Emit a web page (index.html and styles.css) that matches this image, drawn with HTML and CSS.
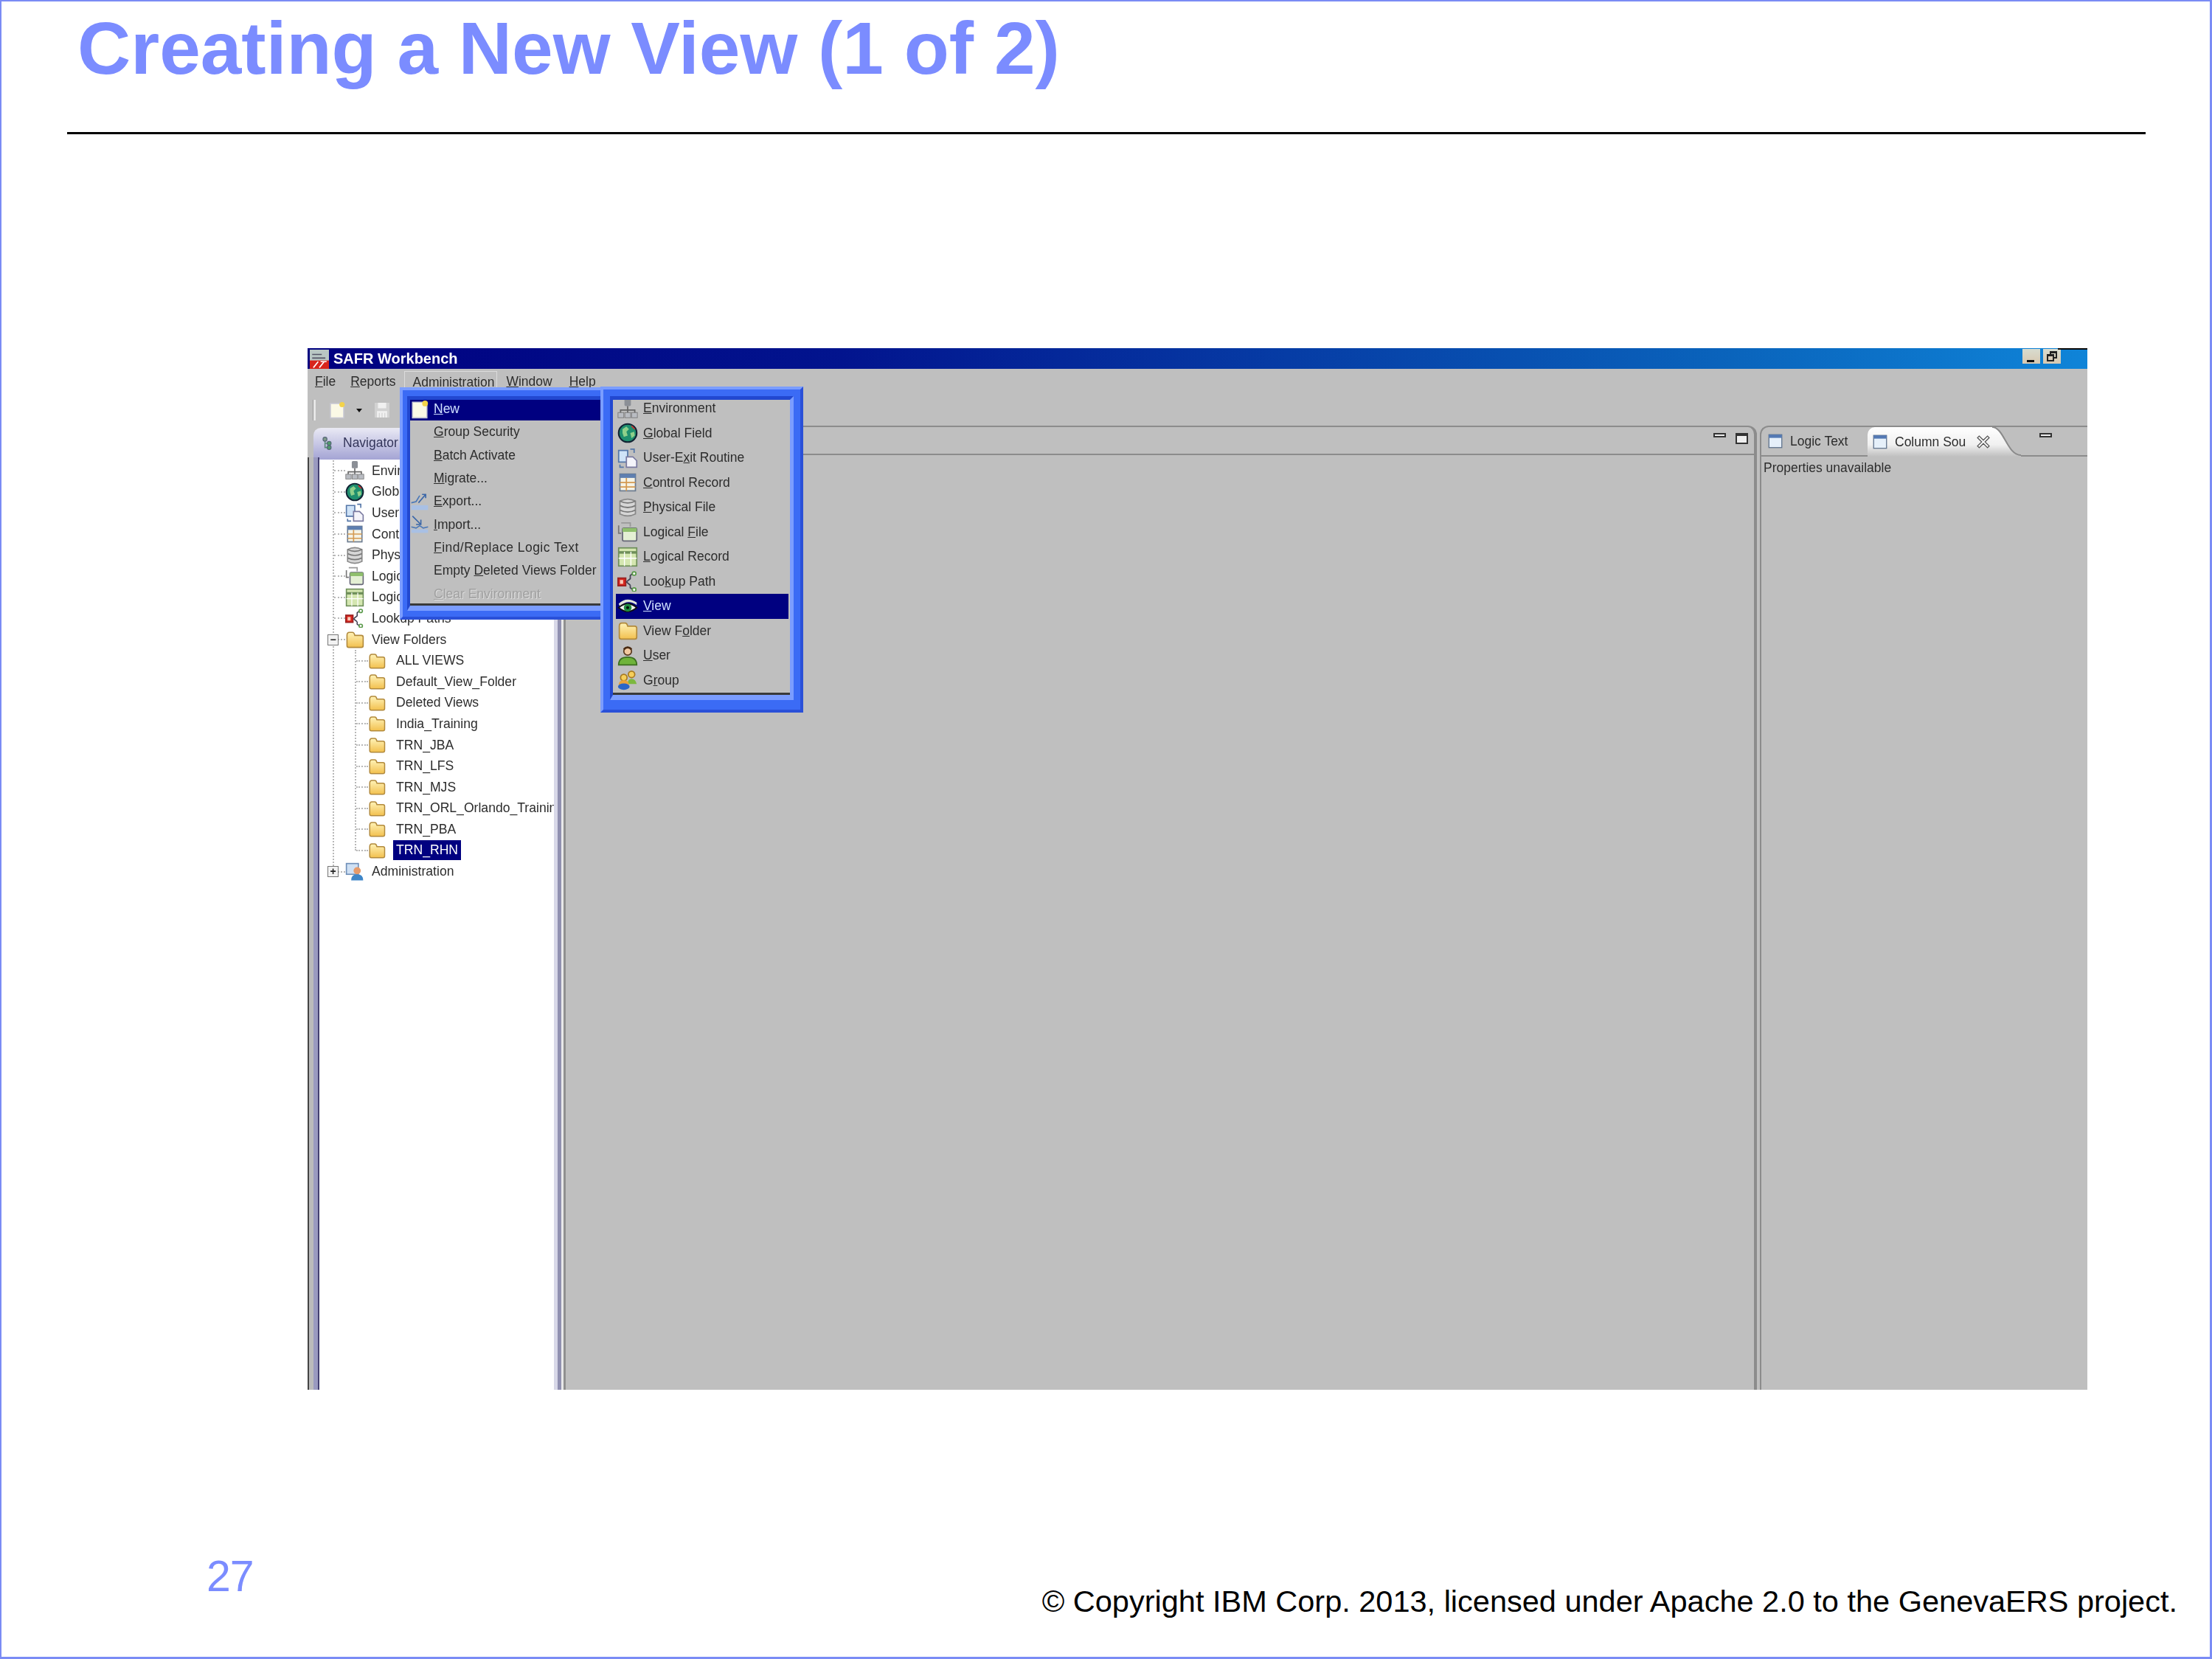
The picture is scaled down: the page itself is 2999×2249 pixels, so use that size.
FILE: index.html
```html
<!DOCTYPE html>
<html lang="en">
<head>
<meta charset="utf-8">
<title>Creating a New View (1 of 2)</title>
<link rel="stylesheet" href="styles.css">
</head>
<body>
<svg class="defs" width="0" height="0" aria-hidden="true">
  <defs>
    <linearGradient id="fold" x1="0" y1="0" x2="0" y2="1"><stop offset="0" stop-color="#fff3b8"/><stop offset="1" stop-color="#f2c04e"/></linearGradient>
    <linearGradient id="tabfill" x1="0" y1="0" x2="0" y2="1"><stop offset="0" stop-color="#fff"/><stop offset=".6" stop-color="#f0f0f0"/><stop offset="1" stop-color="#bfbfbf"/></linearGradient>
    <symbol id="i-folder" viewBox="0 0 16 16"><path d="M1.500 13V4.500Q1.500 2 3.500 2h2.500Q7.500 2 8 4.500h5.500q1.500 0 1.500 1.500v7q0 1.500-1.500 1.500H3q-1.500 0-1.500-1.500z" fill="url(#fold)" stroke="#b28a3c"/></symbol>
    <symbol id="i-env" viewBox="0 0 16 16"><rect x="5.500" y="0" width="5" height="6" rx="1" fill="#8b8f96"/><path d="M8 6v3M2.500 12V9h11v3M8 9v3" stroke="#666" fill="none"/><rect x="0.500" y="11" width="4.500" height="4" fill="#b9bcc2" stroke="#777" stroke-width=".5"/><rect x="5.800" y="11" width="4.500" height="4" fill="#b9bcc2" stroke="#777" stroke-width=".5"/><rect x="11" y="11" width="4.500" height="4" fill="#b9bcc2" stroke="#777" stroke-width=".5"/></symbol>
    <symbol id="i-globe" viewBox="0 0 16 16"><circle cx="8" cy="8" r="7" fill="#1f8f6e" stroke="#123" stroke-width="1.200"/><path d="M4 5l3-2 2 2-2 2 1 3-3 1-1-3zM10 8l3-1 .5 3-2.500 2z" fill="#8fd08a"/><path d="M11 2.500l2.500 2.500" stroke="#c33"/></symbol>
    <symbol id="i-exit" viewBox="0 0 16 16"><path d="M1 2h7v9H1z" fill="#cfe3f7" stroke="#5577a8"/><path d="M7 7h5l3 3v5H7z" fill="#f4f4fa" stroke="#7a7aa0"/><path d="M10 1l3 0 0 3M2 13l0 2 3 0" stroke="#5577a8" fill="none"/></symbol>
    <symbol id="i-table" viewBox="0 0 16 16"><rect x="2" y="1.500" width="12" height="13" fill="#f5f3e6" stroke="#6b7b90"/><rect x="2" y="1.500" width="12" height="3" fill="#5e7fb0"/><path d="M2 8h12M2 11.500h12M7 4.500v10" stroke="#d49a52"/></symbol>
    <symbol id="i-db" viewBox="0 0 16 16"><path d="M2 3q6-3 12 0v10q-6 3-12 0z" fill="#d6d6d6" stroke="#888"/><path d="M2 3q6 3 12 0M2 6.500q6 3 12 0M2 10q6 3 12 0" fill="none" stroke="#777"/></symbol>
    <symbol id="i-lfile" viewBox="0 0 16 16"><path d="M3 1h7v3" fill="none" stroke="#999"/><path d="M1 3v6h2" fill="none" stroke="#777"/><rect x="4" y="5" width="11" height="10" rx="1" fill="#e4f0d4" stroke="#667"/><rect x="4" y="5" width="11" height="3" fill="#8fbf6c"/></symbol>
    <symbol id="i-lrec" viewBox="0 0 16 16"><rect x="1" y="1" width="14" height="14" fill="#d4e6b0" stroke="#6f8f5a"/><path d="M1 4.500h14" stroke="#6f8f5a" stroke-width="2"/><path d="M1 9h14M5.500 4v11M10.500 4v11" stroke="#fff" stroke-width=".8"/></symbol>
    <symbol id="i-look" viewBox="0 0 16 16"><rect x="0.500" y="5.500" width="6" height="6" fill="#d8251c" stroke="#922"/><rect x="2" y="7" width="2.500" height="3" fill="#f9c9b8"/><path d="M7 8.500L10 6V3.500L12 2M10 11V13L12 14.500M7 8.500L10 11" fill="none" stroke="#445"/><circle cx="13" cy="2" r="1.400" fill="#fff" stroke="#5a9a4a"/><circle cx="13" cy="14.500" r="1.400" fill="#fff" stroke="#5a9a4a"/></symbol>
    <symbol id="i-eye" viewBox="0 0 16 16"><rect width="16" height="16" fill="#000080"/><path d="M1 6Q7 0 15 5l0 2Q8 2 2 8z" fill="#dfe5d8"/><path d="M1 9Q8 3 15 9 8 15 1 9z" fill="#eef3ee" stroke="#111"/><circle cx="8" cy="9" r="3" fill="#1f8a3e"/><circle cx="8" cy="9" r="1.200" fill="#02140a"/></symbol>
    <symbol id="i-user" viewBox="0 0 16 16"><circle cx="8" cy="4.500" r="3" fill="#f2c9a0" stroke="#5a3a20"/><path d="M5 3q3-3 6 0" stroke="#4a2c14" stroke-width="1.500" fill="none"/><path d="M1 15q0-6 7-6t7 6z" fill="#6fb33a" stroke="#3c6e20"/></symbol>
    <symbol id="i-group" viewBox="0 0 16 16"><circle cx="11" cy="3.500" r="2.500" fill="#f6cf5a" stroke="#a87a20"/><circle cx="5" cy="6" r="2.500" fill="#f6cf5a" stroke="#a87a20"/><path d="M8 11q0-4 3-4t4 4z" fill="#7cb83f"/><path d="M1 12q0-4 4-4t4 4z" fill="#e8a33a"/><ellipse cx="5" cy="13" rx="4.500" ry="2.500" fill="#2a66c8"/></symbol>
    <symbol id="i-new" viewBox="0 0 16 16"><path d="M2 2h9l3 3v10H2z" fill="#fbf9e6" stroke="#c8c8d4"/><circle cx="12.500" cy="3" r="2.400" fill="#f3d34a"/></symbol>
    <symbol id="i-export" viewBox="0 0 16 16"><path d="M1 9l4-1 3-5" fill="none" stroke="#4a78b8"/><path d="M7 9l6-7M10 2h3v3" fill="none" stroke="#3a66a8"/><rect x="1" y="11" width="14" height="4" fill="#a9c0e4"/></symbol>
    <symbol id="i-import" viewBox="0 0 16 16"><path d="M2 1l7 7M9 4v4H5" fill="none" stroke="#3a66a8"/><path d="M1 10l4 1 3-2 3 2 4-1" fill="none" stroke="#4a78b8"/><rect x="1" y="12" width="14" height="3" fill="#a9c0e4"/></symbol>
    <symbol id="i-nav" viewBox="0 0 16 16"><path d="M5 3v10h5M5 8h5" fill="none" stroke="#5a8a7a" stroke-width="1.400"/><circle cx="5" cy="3" r="2.400" fill="#7f9a8a" stroke="#567"/><circle cx="10" cy="8" r="2.400" fill="#4f9a6a" stroke="#567"/><circle cx="10" cy="13" r="2.400" fill="#4f9a6a" stroke="#567"/></symbol>
    <symbol id="i-admin" viewBox="0 0 16 16"><rect x="1" y="1" width="10" height="9" fill="#cfe0f4" stroke="#6f8fb8"/><circle cx="10" cy="7" r="3" fill="#e69a6a"/><path d="M5 15q0-5 5-5t5 5z" fill="#3f86c8"/></symbol>
    <symbol id="i-win" viewBox="0 0 16 16"><rect x="1" y="1" width="14" height="14" fill="#e6f0fa" stroke="#5c6f8a"/><rect x="1" y="1" width="14" height="3.500" fill="#5479b4"/></symbol>
  </defs>
</svg>

<main class="slide">
  <h1 class="title">Creating a New View (1 of 2)</h1>
  <hr class="rule">

  <section class="app">
    <header class="titlebar">
      <svg class="app-icon" viewBox="0 0 16 16"><rect width="16" height="16" fill="#b9c7c4"/><path d="M0 9h16v7H0z" fill="#d8251c"/><path d="M2 4h8M2 7h11" stroke="#556" /><path d="M3 15l4-5M8 15l4-5M9 10h5" stroke="#fff"/></svg>
      <span class="app-name">SAFR Workbench</span>
      <span class="win-btns">
        <span class="win-btn"><span class="glyph-min"></span></span>
        <span class="win-btn"><span class="glyph-back"></span><span class="glyph-front"></span></span>
      </span>
    </header>

    <nav class="menubar">
      <span class="mi mi-file"><u>F</u>ile</span>
      <span class="mi mi-rep"><u>R</u>eports</span>
      <span class="mi mi-admin"><u>A</u>dministration</span>
      <span class="mi mi-win"><u>W</u>indow</span>
      <span class="mi mi-help"><u>H</u>elp</span>
    </nav>

    <div class="toolbar">
      <span class="tb-sep"></span>
      <svg class="tb-icon"><use href="#i-new"/></svg>
      <span class="tb-arrow"></span>
      <svg class="tb-save" viewBox="0 0 16 16"><rect x="0" y="0" width="16" height="16" fill="#d2d2d2"/><rect x="3.500" y="0" width="9" height="6" fill="#f0f0f0"/><rect x="2.500" y="9" width="11" height="7" fill="#f0f0f0"/><path d="M5 11v5M8 11v5M11 11v5" stroke="#d2d2d2"/></svg>
    </div>

    <div class="workspace">
      <aside class="nav">
        <div class="nav-tab">
          <svg class="nav-icon"><use href="#i-nav"/></svg>
          <span>Navigator</span>
        </div>
        <div class="tree">
          <div class="branch">
            <div class="node"><span class="dash"></span><svg class="ticon"><use href="#i-env"/></svg><span class="lbl">Environments</span></div>
            <div class="node"><span class="dash"></span><svg class="ticon"><use href="#i-globe"/></svg><span class="lbl">Global Fields</span></div>
            <div class="node"><span class="dash"></span><svg class="ticon"><use href="#i-exit"/></svg><span class="lbl">User-Exit Routines</span></div>
            <div class="node"><span class="dash"></span><svg class="ticon"><use href="#i-table"/></svg><span class="lbl">Control Records</span></div>
            <div class="node"><span class="dash"></span><svg class="ticon"><use href="#i-db"/></svg><span class="lbl">Physical Files</span></div>
            <div class="node"><span class="dash"></span><svg class="ticon"><use href="#i-lfile"/></svg><span class="lbl">Logical Files</span></div>
            <div class="node"><span class="dash"></span><svg class="ticon"><use href="#i-lrec"/></svg><span class="lbl">Logical Records</span></div>
            <div class="node"><span class="dash"></span><svg class="ticon"><use href="#i-look"/></svg><span class="lbl">Lookup Paths</span></div>
            <div class="node"><span class="dash"></span><span class="exp">&#8722;</span><svg class="ticon"><use href="#i-folder"/></svg><span class="lbl">View Folders</span></div>
            <div class="branch sub">
              <div class="node"><span class="dash"></span><svg class="ticon"><use href="#i-folder"/></svg><span class="lbl">ALL VIEWS</span></div>
              <div class="node"><span class="dash"></span><svg class="ticon"><use href="#i-folder"/></svg><span class="lbl">Default_View_Folder</span></div>
              <div class="node"><span class="dash"></span><svg class="ticon"><use href="#i-folder"/></svg><span class="lbl">Deleted Views</span></div>
              <div class="node"><span class="dash"></span><svg class="ticon"><use href="#i-folder"/></svg><span class="lbl">India_Training</span></div>
              <div class="node"><span class="dash"></span><svg class="ticon"><use href="#i-folder"/></svg><span class="lbl">TRN_JBA</span></div>
              <div class="node"><span class="dash"></span><svg class="ticon"><use href="#i-folder"/></svg><span class="lbl">TRN_LFS</span></div>
              <div class="node"><span class="dash"></span><svg class="ticon"><use href="#i-folder"/></svg><span class="lbl">TRN_MJS</span></div>
              <div class="node"><span class="dash"></span><svg class="ticon"><use href="#i-folder"/></svg><span class="lbl">TRN_ORL_Orlando_Training</span></div>
              <div class="node"><span class="dash"></span><svg class="ticon"><use href="#i-folder"/></svg><span class="lbl">TRN_PBA</span></div>
              <div class="node"><span class="dash"></span><svg class="ticon"><use href="#i-folder"/></svg><span class="lbl sel">TRN_RHN</span></div>
            </div>
            <div class="node"><span class="dash"></span><span class="exp">+</span><svg class="ticon"><use href="#i-admin"/></svg><span class="lbl">Administration</span></div>
          </div>
        </div>
      </aside>

      <section class="editor">
        <div class="pane-head">
          <span class="btn-min"></span>
          <span class="btn-max"></span>
        </div>
      </section>

      <section class="props">
        <div class="props-head">
          <div class="tab">
            <svg class="tab-icon"><use href="#i-win"/></svg>
            <span>Logic Text</span>
          </div>
          <div class="tab tab-on">
            <svg class="tab-icon"><use href="#i-win"/></svg>
            <span>Column Sou</span>
            <svg class="tab-close" viewBox="0 0 16 16"><path d="M3 1l5 5 5-5 2 2-5 5 5 5-2 2-5-5-5 5-2-2 5-5-5-5z" fill="#fff" stroke="#555" stroke-width="1.200"/></svg>
          </div>
          <svg class="tab-curve" viewBox="0 0 39 40" preserveAspectRatio="none"><path d="M0 0C16 0 20 38 39 38V40H0z" fill="url(#tabfill)"/><path d="M0 0C16 0 20 38 39 38" fill="none" stroke="#8a8a8a" stroke-width="2"/></svg>
          <span class="btn-min props-min"></span>
        </div>
        <p class="props-msg">Properties unavailable</p>
      </section>
    </div>

    <div class="menu menu-admin">
      <div class="menu-body">
        <div class="row row-on"><svg class="micon"><use href="#i-new"/></svg><span><u>N</u>ew</span></div>
        <div class="row"><span class="micon"></span><span><u>G</u>roup Security</span></div>
        <div class="row"><span class="micon"></span><span><u>B</u>atch Activate</span></div>
        <div class="row"><span class="micon"></span><span><u>M</u>igrate...</span></div>
        <div class="row"><svg class="micon"><use href="#i-export"/></svg><span><u>E</u>xport...</span></div>
        <div class="row"><svg class="micon"><use href="#i-import"/></svg><span><u>I</u>mport...</span></div>
        <div class="row row-wide"><span class="micon"></span><span><u>F</u>ind/Replace Logic Text</span></div>
        <div class="row"><span class="micon"></span><span>Empty <u>D</u>eleted Views Folder</span></div>
        <div class="row row-off"><span class="micon"></span><span><u>C</u>lear Environment</span></div>
      </div>
    </div>

    <div class="menu menu-new">
      <div class="menu-body">
        <div class="row"><svg class="micon"><use href="#i-env"/></svg><span><u>E</u>nvironment</span></div>
        <div class="row"><svg class="micon"><use href="#i-globe"/></svg><span><u>G</u>lobal Field</span></div>
        <div class="row"><svg class="micon"><use href="#i-exit"/></svg><span>User-E<u>x</u>it Routine</span></div>
        <div class="row"><svg class="micon"><use href="#i-table"/></svg><span><u>C</u>ontrol Record</span></div>
        <div class="row"><svg class="micon"><use href="#i-db"/></svg><span><u>P</u>hysical File</span></div>
        <div class="row"><svg class="micon"><use href="#i-lfile"/></svg><span>Logical <u>F</u>ile</span></div>
        <div class="row"><svg class="micon"><use href="#i-lrec"/></svg><span><u>L</u>ogical Record</span></div>
        <div class="row"><svg class="micon"><use href="#i-look"/></svg><span>Loo<u>k</u>up Path</span></div>
        <div class="row row-on"><svg class="micon"><use href="#i-eye"/></svg><span><u>V</u>iew</span></div>
        <div class="row"><svg class="micon"><use href="#i-folder"/></svg><span>View F<u>o</u>lder</span></div>
        <div class="row"><svg class="micon"><use href="#i-user"/></svg><span><u>U</u>ser</span></div>
        <div class="row"><svg class="micon"><use href="#i-group"/></svg><span>G<u>r</u>oup</span></div>
      </div>
    </div>
  </section>

  <footer class="footer">
    <span class="page-no">27</span>
    <span class="copyright">© Copyright IBM Corp. 2013, licensed under Apache 2.0 to the GenevaERS project.</span>
  </footer>
</main>
</body>
</html>
```

FILE: styles.css
```css
* { box-sizing: border-box; }
html, body { margin: 0; padding: 0; background: #fff; }
.defs { position: absolute; }

.slide {
  width: 2999px;
  height: 2249px;
  border: 2px solid #7b8cf5;
  border-right-width: 3px;
  border-bottom-width: 3px;
  font-family: "Liberation Sans", Arial, sans-serif;
  overflow: hidden;
  display: flex;
  flex-direction: column;
}
.title {
  margin: 6px 0 0 103px;
  font-size: 100px;
  line-height: 115px;
  font-weight: 700;
  color: #7b8cff;
}
.rule {
  margin: 56px 0 0 89px;
  width: 2818px;
  height: 3px;
  border: 0;
  background: #000;
}

/* ---------- application screenshot ---------- */
.app {
  position: relative;
  margin: 290px 0 0 415px;
  width: 2413px;
  height: 1412px;
  flex: none;
  overflow: hidden;
  background: #bfbfbf;
  display: flex;
  flex-direction: column;
  font-size: 17.5px;
  color: #2c2c2c;
  filter: blur(.7px);
}
.titlebar {
  position: relative;
  height: 28px;
  flex: none;
  display: flex;
  align-items: center;
  background: linear-gradient(90deg, #000080 0%, #02148e 30%, #0a64bc 80%, #0f84d8 100%);
  color: #fff;
  font-weight: 700;
  font-size: 20px;
}
.titlebar::after { content: ""; position: absolute; right: 0; top: 0; width: 40px; height: 2px; background: #0a0a0a; }
.app-icon { width: 28px; height: 26px; margin: 2px 5px 0 2px; }
.win-btns { margin-left: auto; margin-right: 36px; display: flex; gap: 4px; align-self: flex-start; margin-top: 1px; }
.win-btn { width: 24px; height: 20px; background: linear-gradient(180deg, #d8dcd0, #d8c8b0); position: relative; display: block; }
.glyph-min { position: absolute; left: 6px; bottom: 2px; width: 10px; height: 3px; background: #111; }
.glyph-back { position: absolute; left: 9px; top: 3px; width: 10px; height: 10px; border: 2px solid #222; border-top-width: 3px; }
.glyph-front { position: absolute; left: 5px; top: 7px; width: 10px; height: 10px; border: 2px solid #222; border-top-width: 3px; background: #d8ccb8; }

.menubar { height: 35px; flex: none; position: relative; display: flex; align-items: center; }
.mi { display: block; }
.mi-file { margin-left: 10px; }
.mi-rep { margin-left: 20px; }
.mi-admin { margin-left: 11px; padding: 4px 3px 4px 11px; border: 1px solid #dcdcdc; border-bottom: 0; }
.mi-win { margin-left: 12px; }
.mi-help { margin-left: 23px; }

.toolbar { height: 42px; flex: none; display: flex; align-items: center; }
.tb-sep { width: 4px; height: 28px; margin-left: 7px; background: #e6e6e6; border-left: 1px solid #9a9a9a; }
.tb-icon { width: 24px; height: 24px; margin-left: 17px; }
.tb-arrow { width: 0; height: 0; margin-left: 14px; border: 4px solid transparent; border-top: 5px solid #111; margin-top: 5px; }
.tb-save { width: 22px; height: 20px; margin-left: 16px; }

.workspace { flex: 1; min-height: 0; display: grid; grid-template-columns: 350px 1615px 4px 1fr; }

/* navigator */
.nav { display: flex; flex-direction: column; min-width: 0; position: relative; padding: 3px 0 0 8px; }
.nav::before {
  content: "";
  position: absolute;
  left: 0;
  top: 43px;
  bottom: 0;
  width: 16px;
  background: linear-gradient(90deg, #444 0 2px, #bbb 2px 8px, #9a9ac0 8px 14px, #444070 14px 16px);
}
.nav::after {
  content: "";
  position: absolute;
  left: 334px;
  top: 43px;
  bottom: 0;
  width: 16px;
  background: linear-gradient(90deg, #d8d8e8 0 5px, #9090b0 5px 10px, #e8e8e8 10px 13px, #909090 13px 16px);
}
.nav-tab {
  height: 43px;
  flex: none;
  display: flex;
  align-items: center;
  gap: 12px;
  padding: 0 0 3px 10px;
  width: 130px;
  border-radius: 10px 0 0 0;
  border-top: 1px solid #e8e8f0;
  background: linear-gradient(180deg, #e8e8f4, #a4a4d4);
  color: #33355a;
}
.nav-icon { width: 18px; height: 26px; flex: none; }
.tree {
  position: absolute;
  left: 16px;
  right: 16px;
  top: 46px;
  bottom: 0;
  padding-top: 1px;
  background: #fff;
  overflow: hidden;
  font-size: 17.600px;
  z-index: 1;
}
.branch { margin-left: 18px; border-left: 2px dotted #b8b8b8; height: 558px; }
.branch.sub { margin: 0 0 14px 28px; height: 272px; }
.node { height: 28.600px; display: flex; align-items: center; position: relative; white-space: nowrap; }
.dash { width: 15px; flex: none; border-top: 2px dotted #b8b8b8; }
.ticon { width: 26px; height: 26px; flex: none; }
.lbl { margin-left: 10px; }
.sub .lbl { margin-left: 14px; }
.sub .ticon { width: 24px; height: 24px; }
.sub .dash { width: 16px; }
.sub .sel { background: #000080; color: #fff; padding: 3px 4px; margin-left: 10px; }
.exp {
  position: absolute;
  left: -9px;
  top: 7px;
  width: 15px;
  height: 15px;
  border: 1px solid #777;
  background: #f2f2f2;
  font-size: 14px;
  line-height: 12px;
  text-align: center;
  font-weight: 700;
  color: #222;
}

/* editor */
.editor {
  grid-column: 2;
  border: 2px solid #8c8c8c;
  border-right-width: 4px;
  border-left: 0;
  border-bottom: 0;
  border-radius: 0 12px 0 0;
  background: #bfbfbf;
}
.pane-head { height: 38px; border-bottom: 2px solid #8c8c8c; display: flex; justify-content: flex-end; gap: 13px; padding: 8px 8px 0 0; }
.btn-min { width: 17px; height: 6px; border: 2px solid #333; background: #eee; display: block; }
.btn-max { width: 17px; height: 15px; border: 2px solid #333; border-top-width: 4px; background: #eee; display: block; }

/* properties */
.props { grid-column: 4; border-left: 2px solid #8c8c8c; border-top: 2px solid #8c8c8c; border-radius: 12px 0 0 0; min-width: 0; }
.props-head { height: 40px; display: flex; align-items: stretch; position: relative; border-bottom: 2px solid #8c8c8c; white-space: nowrap; }
.tab { display: flex; align-items: center; padding-left: 9px; gap: 10px; width: 144px; height: 38px; }
.tab-icon { width: 20px; height: 20px; flex: none; }
.tab-on { width: 169px; height: 40px; padding-left: 7px; background: linear-gradient(180deg, #fff, #f0f0f0 60%, #bfbfbf); border-radius: 10px 0 0 0; }
.tab-close { width: 18px; height: 18px; margin-left: 5px; flex: none; }
.tab-curve { width: 39px; height: 40px; flex: none; }
.props-min { margin: 8px 0 0 25px; }
.props-msg { margin: 5px 0 0 3px; font-size: 17.500px; white-space: nowrap; }

/* overlay menus */
.menu {
  position: absolute;
  border: 4px solid #2a50d8;
  border-top-color: #7b9dff;
  border-left-color: #7b9dff;
  background: #3b6bf5;
  z-index: 2;
}
.menu-admin { left: 125px; top: 53px; width: 290px; height: 315px; padding: 8px 8px 8px 6px; }
.menu-new { left: 397px; top: 52px; width: 275px; height: 442px; padding: 9px 9px 13px 9px; z-index: 3; }
.menu-body {
  background: #bfbfbf;
  overflow: hidden;
  height: 100%;
  border: 5px solid #2248d0;
  border-right-color: #7b9dff;
  border-bottom-color: #7b9dff;
  border-bottom-width: 7px;
  border-left-width: 4px;
  white-space: nowrap;
  box-shadow: inset 0 -3px 0 #3a3a3a;
}
.row { display: flex; align-items: center; }
.menu-admin .menu-body { position: relative; height: 291px; }
.menu-admin .row { height: 31.300px; }
.menu-admin .row:first-child { margin-top: -3px; }
.menu-admin .micon { width: 26px; height: 26px; margin-right: 6px; flex: none; }
.menu-new .row { height: 33.500px; margin: 0 2px 0 4px; padding-left: 2px; }
.menu-new .row:first-child { margin-top: -5px; }
.menu-new .micon { width: 28px; height: 28px; margin-right: 7px; flex: none; }
.row-on { background: #000080; color: #cfe0ff; }
.row-off { color: #a0a0a0; text-shadow: 1px 1px 0 #dedede; }
.row-wide { letter-spacing: .45px; }

/* footer */
.footer { flex: 1; display: flex; align-items: flex-start; margin-top: 219px; padding-right: 44px; }
.page-no { margin-left: 278px; font-size: 59px; line-height: 69px; letter-spacing: -1px; color: #7b8cff; }
.copyright { margin: 44px 0 0 auto; font-size: 41.500px; line-height: 48px; color: #000; white-space: nowrap; }
```
